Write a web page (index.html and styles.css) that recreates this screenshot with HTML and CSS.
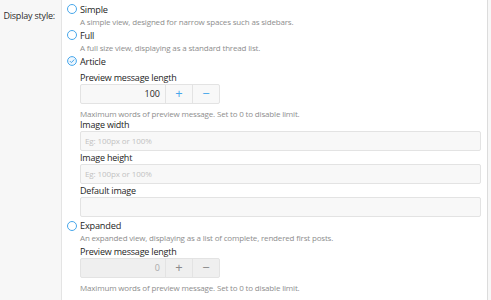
FILE: index.html
```html
<!DOCTYPE html>
<html>
<head>
<meta charset="utf-8">
<link rel="stylesheet" href="styles.css">
</head>
<body>
<div class="form-row">
  <div class="label-col"><span class="row-label">Display style:</span></div>
  <div class="content-col">
    <div class="option">
      <div class="opt-head"><span class="radio"></span><span class="opt-label">Simple</span></div>
      <div class="hint">A simple view, designed for narrow spaces such as sidebars.</div>
    </div>
    <div class="option">
      <div class="opt-head"><span class="radio"></span><span class="opt-label">Full</span></div>
      <div class="hint">A full size view, displaying as a standard thread list.</div>
    </div>
    <div class="option">
      <div class="opt-head">
        <svg class="radio-svg" width="10" height="10" viewBox="0 0 10 10"><circle cx="5" cy="5" r="4.4" fill="#eef6fd" stroke="#47a7eb" stroke-width="1"/><path d="M2.9 5.1 L4.4 6.6 L7.2 3.6" fill="none" stroke="#47a7eb" stroke-width="1"/></svg>
        <span class="opt-label">Article</span>
      </div>
      <div class="sub">
        <div class="field-label">Preview message length</div>
        <div class="spin">
          <div class="spin-value">100</div>
          <div class="spin-btn">+</div>
          <div class="spin-btn">&minus;</div>
        </div>
        <div class="hint field-hint">Maximum words of preview message. Set to 0 to disable limit.</div>
        <div class="field-label">Image width</div>
        <div class="text-input placeholder">Eg: 100px or 100%</div>
        <div class="field-label gap">Image height</div>
        <div class="text-input placeholder">Eg: 100px or 100%</div>
        <div class="field-label gap">Default image</div>
        <div class="text-input"></div>
      </div>
    </div>
    <div class="option expanded">
      <div class="opt-head"><span class="radio"></span><span class="opt-label">Expanded</span></div>
      <div class="hint">An expanded view, displaying as a list of complete, rendered first posts.</div>
      <div class="sub sub-tight">
        <div class="field-label">Preview message length</div>
        <div class="spin disabled">
          <div class="spin-value">0</div>
          <div class="spin-btn">+</div>
          <div class="spin-btn">&minus;</div>
        </div>
        <div class="hint field-hint">Maximum words of preview message. Set to 0 to disable limit.</div>
      </div>
    </div>
  </div>
  <div class="edge"></div>
</div>
</body>
</html>
```
FILE: styles.css
```css
html, body {
  margin: 0;
  padding: 0;
  background: #ffffff;
}
body {
  font-family: "Open Sans", "Noto Sans", sans-serif;
  color: #141414;
  width: 491px;
  height: 300px;
  overflow: hidden;
}
.form-row {
  display: flex;
  min-height: 300px;
}
.label-col {
  width: 62px;
  flex: none;
  background: #f7f7f7;
  border-right: 1px solid #e4e4e4;
  text-align: right;
  box-sizing: border-box;
  padding-right: 6px;
  padding-top: 2px;
  white-space: nowrap;
}
.row-label {
  font-size: 9px;
  line-height: 13px;
  color: #2b2b2b;
  letter-spacing: -0.2px;
}
.content-col {
  flex: 1;
  padding: 2.5px 6px 0 5px;
  border-right: 1px solid #dcdcdc;
}
.edge {
  width: 3px;
  flex: none;
  background: #f7f7f7;
}
.option {
  margin-bottom: 2px;
}
.opt-head {
  display: flex;
  align-items: center;
  height: 13px;
}
.radio {
  width: 8px;
  height: 8px;
  border: 1px solid #47a7eb;
  border-radius: 50%;
  box-sizing: content-box;
  margin-right: 3px;
  flex: none;
}
.radio-svg {
  flex: none;
  margin-right: 3px;
}
.opt-label {
  font-size: 9.2px;
  line-height: 13px;
  letter-spacing: -0.2px;
  color: #1e1e1e;
}
.hint {
  padding-left: 13px;
  font-size: 8px;
  line-height: 11px;
  color: #8e8e8e;
  letter-spacing: -0.17px;
  white-space: nowrap;
}
.sub {
  padding-left: 13px;
  padding-top: 4px;
}
.sub-tight {
  padding-top: 2.5px;
}
.expanded {
  margin-top: 2.5px;
}
.sub .hint {
  padding-left: 0;
}
.field-label {
  font-size: 9px;
  line-height: 12px;
  letter-spacing: -0.2px;
  color: #1e1e1e;
}
.field-label.gap {
  margin-top: 1px;
}
.field-hint {
  margin-top: 4px;
}
.spin {
  display: flex;
  width: 140px;
  height: 20px;
  box-sizing: border-box;
  border: 1px solid #e3e3e3;
  border-radius: 2px;
  background: #f8f8f8;
}
.spin-value {
  flex: 1;
  text-align: right;
  padding-right: 5px;
  font-size: 9px;
  line-height: 18px;
  color: #1e1e1e;
  border-right: 1px solid #e3e3e3;
}
.spin-btn {
  width: 26px;
  text-align: center;
  font-size: 13px;
  line-height: 17px;
  color: #47a7eb;
}
.spin-btn + .spin-btn {
  border-left: 1px solid #e3e3e3;
}
.spin.disabled {
  background: #efefef;
}
.spin.disabled .spin-value {
  color: #a9a9a9;
}
.spin.disabled .spin-btn {
  color: #8a8a8a;
}
.text-input {
  height: 20px;
  box-sizing: border-box;
  border: 1px solid #e3e3e3;
  border-radius: 2px;
  background: #f8f8f8;
  padding-left: 4px;
  font-size: 8px;
  line-height: 18px;
  letter-spacing: -0.1px;
}
.placeholder {
  color: #c2c2c2;
}
```
